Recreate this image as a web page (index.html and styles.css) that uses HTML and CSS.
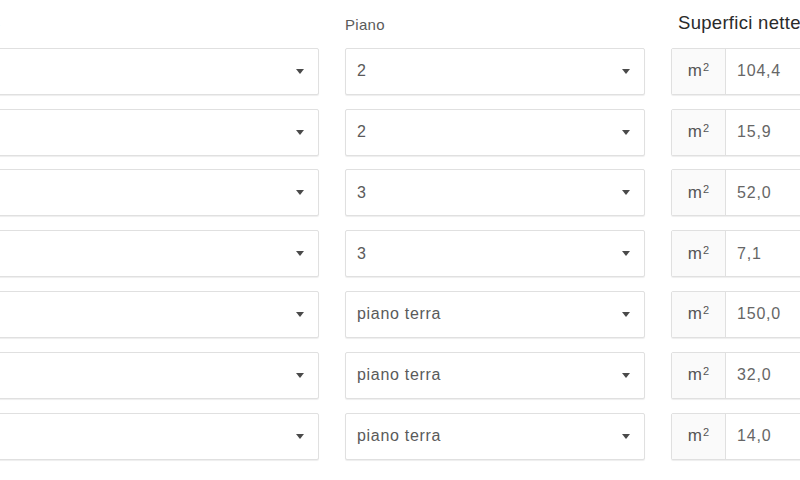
FILE: index.html
```html
<!DOCTYPE html>
<html lang="it">
<head>
<meta charset="utf-8">
<title>Superfici</title>
<link rel="stylesheet" href="styles.css">
</head>
<body>
<div class="grid">
  <div class="label">Destinazione</div>
  <div class="label">Piano</div>
  <div class="label label-strong">Superfici nette</div>

  <div class="select"><span class="val"></span><span class="caret"></span></div>
  <div class="select"><span class="val">2</span><span class="caret"></span></div>
  <div class="group"><span class="addon">m<sup>2</sup></span><span class="num">104,4</span></div>

  <div class="select"><span class="val"></span><span class="caret"></span></div>
  <div class="select"><span class="val">2</span><span class="caret"></span></div>
  <div class="group"><span class="addon">m<sup>2</sup></span><span class="num">15,9</span></div>

  <div class="select"><span class="val"></span><span class="caret"></span></div>
  <div class="select"><span class="val">3</span><span class="caret"></span></div>
  <div class="group"><span class="addon">m<sup>2</sup></span><span class="num">52,0</span></div>

  <div class="select"><span class="val"></span><span class="caret"></span></div>
  <div class="select"><span class="val">3</span><span class="caret"></span></div>
  <div class="group"><span class="addon">m<sup>2</sup></span><span class="num">7,1</span></div>

  <div class="select"><span class="val"></span><span class="caret"></span></div>
  <div class="select"><span class="val">piano terra</span><span class="caret"></span></div>
  <div class="group"><span class="addon">m<sup>2</sup></span><span class="num">150,0</span></div>

  <div class="select"><span class="val"></span><span class="caret"></span></div>
  <div class="select"><span class="val">piano terra</span><span class="caret"></span></div>
  <div class="group"><span class="addon">m<sup>2</sup></span><span class="num">32,0</span></div>

  <div class="select"><span class="val"></span><span class="caret"></span></div>
  <div class="select"><span class="val">piano terra</span><span class="caret"></span></div>
  <div class="group"><span class="addon">m<sup>2</sup></span><span class="num">14,0</span></div>
</div>
</body>
</html>
```

FILE: styles.css
```css
html, body {
  margin: 0;
  padding: 0;
  background: #ffffff;
  overflow: hidden;
}
body {
  width: 800px;
  height: 480px;
  font-family: "Liberation Sans", Arial, sans-serif;
  color: #555;
}
.grid {
  display: grid;
  grid-template-columns: 409px 300px 200px;
  grid-template-rows: 34px repeat(7, 47px);
  column-gap: 26px;
  row-gap: 13.8px;
  margin-left: -90px;
}
.label {
  font-size: 15px;
  line-height: 18px;
  padding-top: 16px;
  letter-spacing: 0.3px;
  color: #5a5a5a;
  white-space: nowrap;
}
.label-strong {
  font-size: 18.5px;
  line-height: 22px;
  padding-top: 12px;
  padding-left: 7px;
  letter-spacing: 0.3px;
  color: #2a2a2a;
}
.select, .group {
  box-sizing: border-box;
  border: 1px solid #e0e0e0;
  border-radius: 2px;
  box-shadow: 0 1px 1px rgba(0, 0, 0, 0.07);
  background: #fff;
  display: flex;
  align-items: center;
}
.select {
  justify-content: space-between;
  padding: 0 14px 0 11px;
  font-size: 16px;
  letter-spacing: 0.7px;
  color: #5a5a5a;
}
.caret {
  width: 0;
  height: 0;
  border-left: 4px solid transparent;
  border-right: 4px solid transparent;
  border-top: 5px solid #4a4a4a;
}
.group {
  font-size: 16px;
  letter-spacing: 0.8px;
  color: #666;
}
.addon {
  box-sizing: border-box;
  width: 54px;
  height: 100%;
  display: flex;
  align-items: center;
  justify-content: center;
  border-right: 1px solid #e0e0e0;
  background: #fafafa;
  color: #555;
  font-size: 17px;
  letter-spacing: 0;
}
.addon sup {
  font-size: 11px;
  line-height: 0;
  position: relative;
  top: -4px;
  margin-left: 1px;
}
.num {
  padding-left: 11px;
}
```
